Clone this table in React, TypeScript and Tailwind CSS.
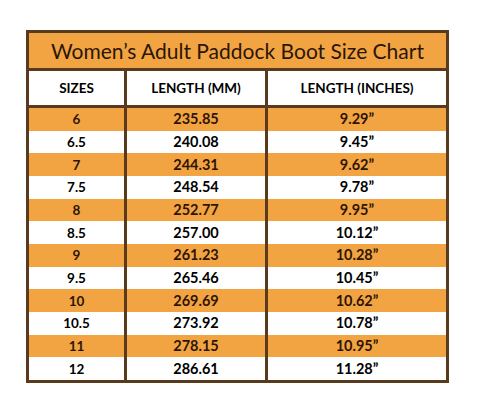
import React from "react";

const rows: [string, string, string][] = [
  ["6", "235.85", "9.29\u201D"],
  ["6.5", "240.08", "9.45\u201D"],
  ["7", "244.31", "9.62\u201D"],
  ["7.5", "248.54", "9.78\u201D"],
  ["8", "252.77", "9.95\u201D"],
  ["8.5", "257.00", "10.12\u201D"],
  ["9", "261.23", "10.28\u201D"],
  ["9.5", "265.46", "10.45\u201D"],
  ["10", "269.69", "10.62\u201D"],
  ["10.5", "273.92", "10.78\u201D"],
  ["11", "278.15", "10.95\u201D"],
  ["12", "286.61", "11.28\u201D"],
];

export default function App() {
  return (
    <div
      className="w-[480px] h-[411px] bg-white pt-[30px] pl-[26px]"
      style={{ fontFamily: "Lato, 'Open Sans', sans-serif" }}
    >
      <div className="w-[423px] border-[3px] border-[#5a3a1c] flex flex-col">
        <div className="h-[35px] bg-[#f2a443] flex items-center justify-center text-[21px] text-[#2a1608] border-b-[3px] border-[#5a3a1c] box-content">
          Women’s Adult Paddock Boot Size Chart
        </div>
        <div className="h-[34px] flex bg-white text-[13.5px] font-bold text-black border-b-[3px] border-[#5a3a1c] box-content">
          <div className="w-[95px] flex items-center justify-center border-r-[3px] border-[#5a3a1c] box-content">SIZES</div>
          <div className="w-[138px] flex items-center justify-center border-r-[3px] border-[#5a3a1c] box-content">LENGTH (MM)</div>
          <div className="w-[178px] flex items-center justify-center">LENGTH (INCHES)</div>
        </div>
        <div className="h-[272px] grid grid-rows-12">
          {rows.map((r, i) => {
            const orange = i % 2 === 0;
            return (
              <div
                key={r[0]}
                className={
                  "flex text-[14.5px] font-bold " +
                  (orange ? "bg-[#f2a443] text-[#2e1404]" : "bg-white text-black")
                }
              >
                <div className="w-[95px] flex items-center justify-center border-r-[3px] border-[#5a3a1c] box-content text-[13.5px]">
                  {r[0]}
                </div>
                <div className="w-[138px] flex items-center justify-center border-r-[3px] border-[#5a3a1c] box-content">
                  {r[1]}
                </div>
                <div className="w-[178px] flex items-center justify-center">{r[2]}</div>
              </div>
            );
          })}
        </div>
      </div>
    </div>
  );
}
